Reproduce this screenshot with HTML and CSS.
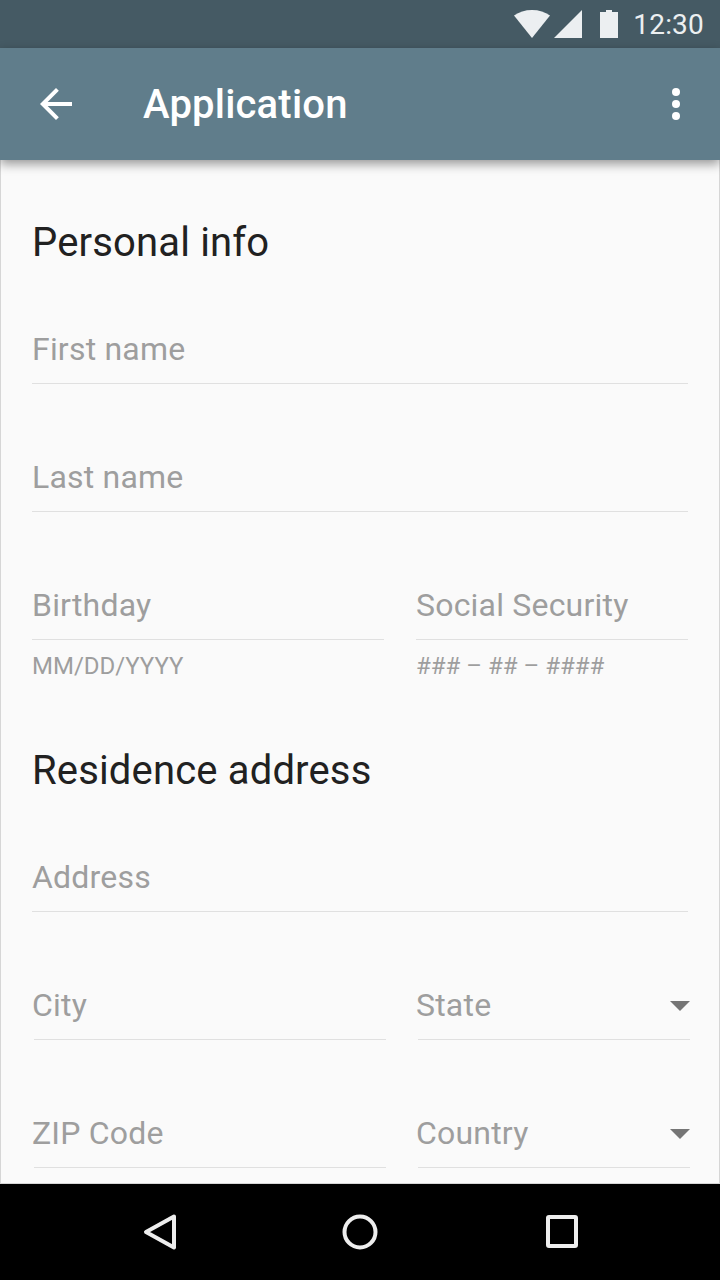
FILE: index.html
```html
<!DOCTYPE html>
<html lang="en">
<head>
    <meta charset="UTF-8">
    <title>Application</title>
    <link rel="stylesheet" href="styles.css">
</head>
<body>
    <div class="screen">
        <div class="status-bar">
            <svg class="status-icon wifi" width="36" height="28" viewBox="0 0 36 28">
                <path d="M18 28L0 5.5C5 2 11 0 18 0s13 2 18 5.5z"/>
            </svg>
            <svg class="status-icon signal" width="28" height="28" viewBox="0 0 28 28">
                <path d="M0 28L28 0v28z"/>
            </svg>
            <svg class="status-icon battery" width="18" height="28" viewBox="0 0 18 28">
                <path d="M6 0h6v2h6v26H0V2h6z"/>
            </svg>
            <span class="clock">12:30</span>
        </div>
        <div class="toolbar">
            <svg class="toolbar-icon" width="48" height="48" viewBox="0 0 24 24">
                <path d="M20 11H7.83l5.59-5.59L12 4l-8 8 8 8 1.41-1.41L7.83 13H20v-2z"/>
            </svg>
            <div class="toolbar-title">Application</div>
            <svg class="toolbar-icon" width="48" height="48" viewBox="0 0 24 24">
                <circle cx="12" cy="6" r="2"/>
                <circle cx="12" cy="12" r="2"/>
                <circle cx="12" cy="18" r="2"/>
            </svg>
        </div>
        <div class="form">
            <h2 class="section-title">Personal info</h2>
            <div class="field"><span>First name</span></div>
            <div class="field"><span>Last name</span></div>
            <div class="field-row">
                <div>
                    <div class="field"><span>Birthday</span></div>
                    <div class="helper">MM/DD/YYYY</div>
                </div>
                <div>
                    <div class="field"><span>Social Security</span></div>
                    <div class="helper">### – ## – ####</div>
                </div>
            </div>
            <h2 class="section-title">Residence address</h2>
            <div class="field"><span>Address</span></div>
            <div class="field-row nudged">
                <div class="field"><span>City</span></div>
                <div class="field"><span>State</span><i class="caret"></i></div>
            </div>
            <div class="field-row nudged">
                <div class="field"><span>ZIP Code</span></div>
                <div class="field"><span>Country</span><i class="caret"></i></div>
            </div>
        </div>
        <div class="nav-bar">
            <svg class="nav-icon" width="48" height="48" viewBox="0 0 48 48">
                <path d="M38 8.5L10 24l28 15.5z"/>
            </svg>
            <svg class="nav-icon" width="48" height="48" viewBox="0 0 48 48">
                <circle cx="24" cy="24" r="15.5"/>
            </svg>
            <svg class="nav-icon" width="48" height="48" viewBox="0 0 48 48">
                <rect x="12" y="9" width="28" height="29" rx="1"/>
            </svg>
        </div>
    </div>
</body>
</html>
```

FILE: styles.css
```css
body {
    margin: 0;
    background-color: #fafafa;
    font-family: Roboto, "Liberation Sans", sans-serif;
}
.screen {
    display: flex;
    flex-direction: column;
    width: 720px;
    height: 1280px;
    overflow: hidden;
}
.status-bar {
    display: flex;
    align-items: center;
    flex: none;
    height: 48px;
    padding-right: 16px;
    justify-content: flex-end;
    background-color: #455a64;
    box-sizing: border-box;
}
.status-icon {
    fill: #eceff1;
}
.wifi {
    margin-right: 4px;
}
.signal {
    margin-right: 18px;
}
.battery {
    margin-right: 15px;
}
.clock {
    font-size: 28px;
    letter-spacing: 0.2px;
    color: #eceff1;
}
.toolbar {
    display: flex;
    align-items: center;
    flex: none;
    position: relative;
    z-index: 1;
    height: 112px;
    padding: 0 20px 0 32px;
    background-color: #607d8b;
    box-shadow: 0 4px 10px rgba(0,0,0,0.4);
}
.toolbar-icon {
    fill: #fff;
    flex: none;
}
.toolbar-title {
    flex: 1;
    margin-left: 63px;
    font-size: 40px;
    font-weight: 500;
    letter-spacing: 0.2px;
    color: #fff;
}
.form {
    flex: 1;
    min-height: 0;
    padding: 0 31px;
    border: 1px solid #d6d6d6;
    border-top: none;
    overflow: hidden;
}
.section-title {
    height: 64px;
    margin: 0 0 46px 0;
    font-size: 40px;
    font-weight: 400;
    letter-spacing: 0.16px;
    line-height: 66px;
    color: #212121;
}
.form > .section-title:first-child {
    margin-top: 50px;
}
.field {
    display: flex;
    justify-content: space-between;
    align-items: center;
    box-sizing: border-box;
    height: 64px;
    padding-bottom: 6px;
    margin-bottom: 64px;
    border-bottom: 1px solid #e0e0e0;
    font-size: 32px;
    letter-spacing: 0.2px;
    color: #9e9e9e;
}
.field-row {
    display: grid;
    grid-template-columns: 352px 272px;
    gap: 32px;
}
.field-row > div > .field {
    margin-bottom: 0;
}
.helper {
    height: 52px;
    margin-bottom: 46px;
    font-size: 24px;
    line-height: 52px;
    color: #9e9e9e;
}
.nudged {
    margin: 0 -2px 0 2px;
}
.nudged .field > span {
    margin-left: -2px;
}
.caret {
    width: 0;
    height: 0;
    margin-top: 2px;
    border-left: 10px solid transparent;
    border-right: 10px solid transparent;
    border-top: 10px solid #757575;
}
.nav-bar {
    display: flex;
    align-items: center;
    flex: none;
    gap: 152px;
    height: 96px;
    padding-left: 136px;
    background-color: #000;
}
.nav-icon {
    fill: none;
    stroke: #eeeeee;
    stroke-width: 4;
    stroke-linejoin: round;
}
```
